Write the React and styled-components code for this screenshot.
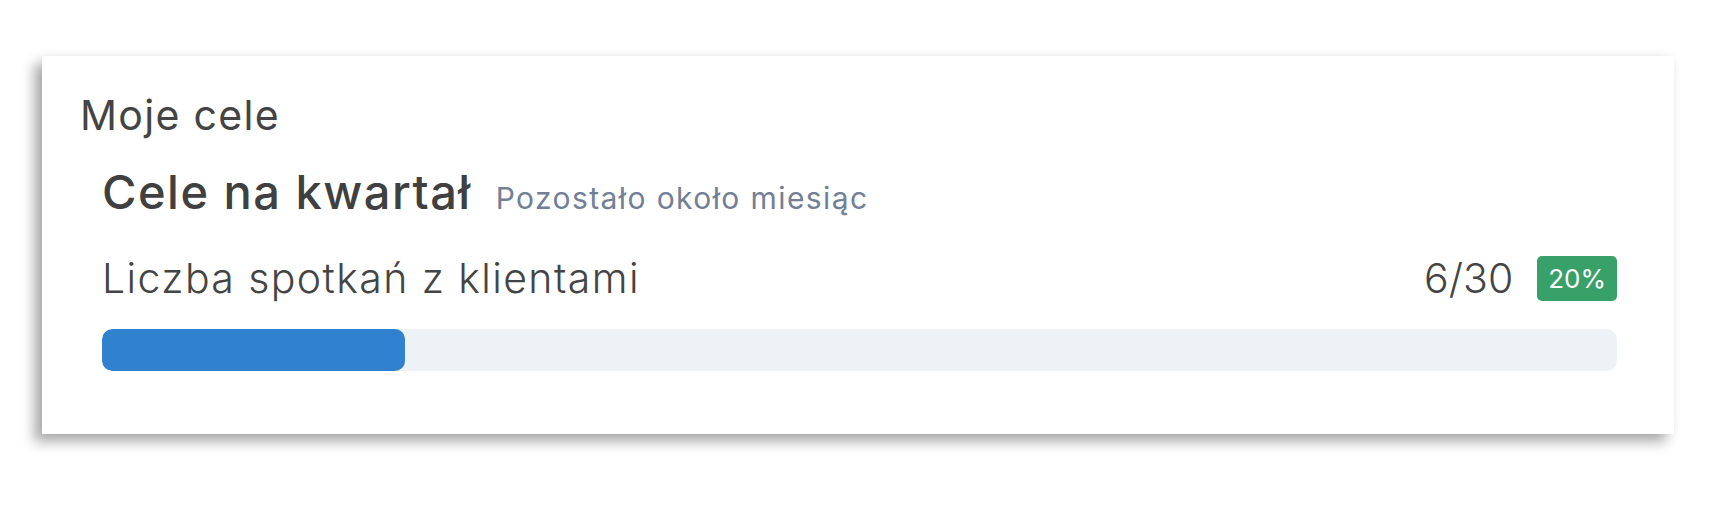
import React from "react";
import styled, { createGlobalStyle } from "styled-components";

const GlobalStyle = createGlobalStyle`
	body {
		margin: 0;
		background: #fff;
		font-family: "Inter", "Noto Sans", sans-serif;
		color: #444;
	}
`;

const Page = styled.div`
	padding: 56px 51px 40px 42px;
`;

const Card = styled.section`
	background: #fff;
	padding: 39px 35px 63px 38px;
	box-shadow: -8px 8px 12px rgba(0, 0, 0, 0.32), 0 -1px 10px rgba(0, 0, 0, 0.05);
`;

const Heading = styled.h2`
	margin: 0;
	font-size: 41px;
	line-height: 1;
	font-weight: 400;
	letter-spacing: 1.3px;
	color: #444;
`;

const Goals = styled.div`
	padding: 0 22px;
	margin-top: 32px;
`;

const GoalHeader = styled.div`
	display: flex;
	align-items: baseline;
	gap: 24px;
`;

const GoalTitle = styled.h3`
	margin: 0;
	font-size: 47px;
	line-height: 1;
	font-weight: 500;
	letter-spacing: 1.5px;
	color: #404040;
`;

const Remaining = styled.span`
	font-size: 30px;
	line-height: 1;
	letter-spacing: 1.4px;
	color: #718096;
`;

const MetricRow = styled.div`
	display: flex;
	align-items: center;
	justify-content: space-between;
	margin-top: 41px;
`;

const MetricLabel = styled.span`
	font-size: 41px;
	line-height: 1;
	font-weight: 300;
	letter-spacing: 1.4px;
	color: #444;
`;

const MetricValue = styled.div`
	display: flex;
	align-items: center;
	gap: 24px;
`;

const Count = styled.span`
	font-size: 41px;
	line-height: 1;
	font-weight: 300;
	color: #444;
`;

const Badge = styled.span`
	display: inline-flex;
	align-items: center;
	height: 45px;
	padding: 0 11px;
	border-radius: 5px;
	background: ${({ color }) => color || "#38a169"};
	color: #fff;
	font-size: 26px;
	font-weight: 400;
`;

const Track = styled.div`
	margin-top: 28px;
	height: 42px;
	border-radius: 10px;
	background: #edf2f7;
	overflow: hidden;
`;

const Fill = styled.div`
	height: 100%;
	border-radius: 10px;
	background: #3182ce;
`;

const goal = {
	title: "Cele na kwartał",
	remaining: "Pozostało około miesiąc",
	label: "Liczba spotkań z klientami",
	current: 6,
	target: 30,
};

const App = () => {
	const pct = Math.round((goal.current / goal.target) * 100);

	return (
		<Page>
			<GlobalStyle />
			<Card>
				<Heading>Moje cele</Heading>
				<Goals>
					<GoalHeader>
						<GoalTitle>{goal.title}</GoalTitle>
						<Remaining>{goal.remaining}</Remaining>
					</GoalHeader>
					<MetricRow>
						<MetricLabel>{goal.label}</MetricLabel>
						<MetricValue>
							<Count>
								{goal.current}/{goal.target}
							</Count>
							<Badge>{pct}%</Badge>
						</MetricValue>
					</MetricRow>
					<Track>
						<Fill style={{ width: `${pct}%` }} />
					</Track>
				</Goals>
			</Card>
		</Page>
	);
};

export default App;
